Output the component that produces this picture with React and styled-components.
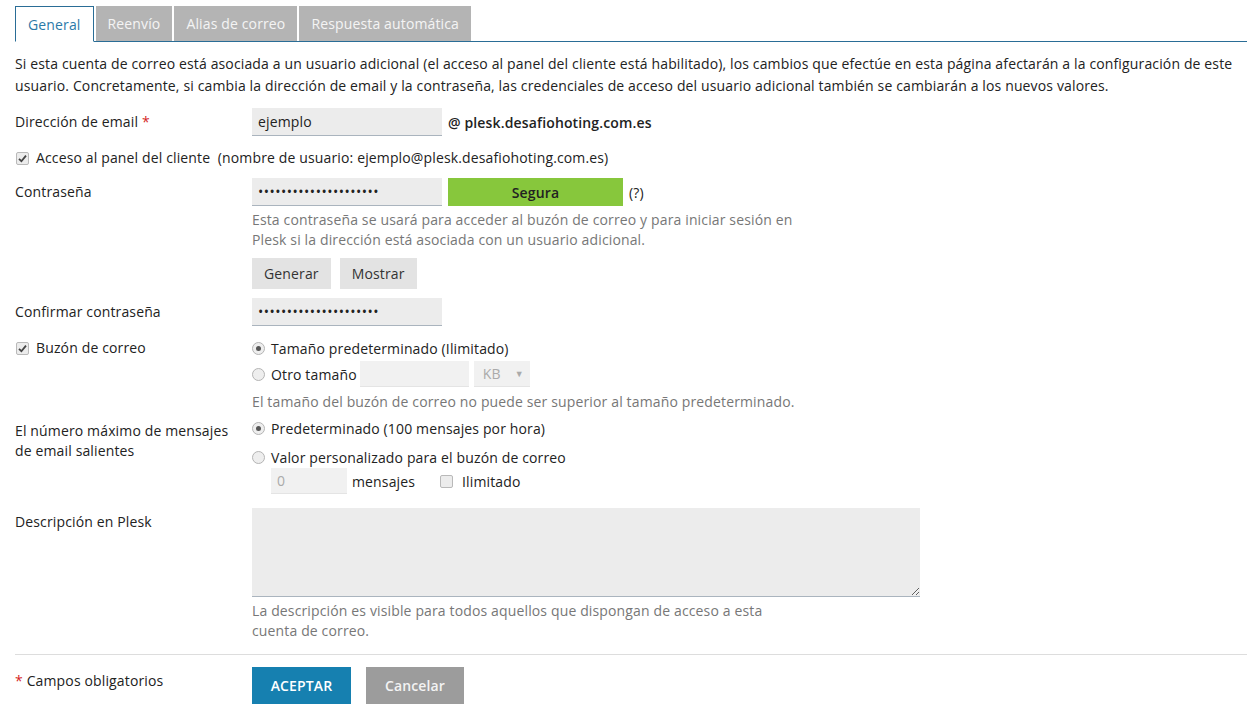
import React from "react";
import styled, { createGlobalStyle } from "styled-components";

const FONT = `"Open Sans", "Liberation Sans", sans-serif`;

const GlobalStyle = createGlobalStyle`
  body {
    margin: 0;
    background: #fff;
    font-family: ${FONT};
    font-size: 14px;
    letter-spacing: 0.14px;
    color: #222;
  }
`;

const Page = styled.div`
  padding: 6px 9px 0 15px;
`;

const TabBar = styled.div`
  display: flex;
  gap: 2px;
  border-bottom: 1px solid #2a6d96;
  height: 35px;
`;

const Tab = styled.div`
  box-sizing: border-box;
  padding: 0 12px;
  display: flex;
  align-items: center;
  background: ${(p) => (p.active ? "#fff" : "#b4b4b4")};
  color: ${(p) => (p.active ? "#2b79a8" : "#f4f4f4")};
  border: ${(p) => (p.active ? "1px solid #2a6d96" : "none")};
  border-bottom: ${(p) => (p.active ? "1px solid #fff" : "none")};
  height: ${(p) => (p.active ? "36px" : "35px")};
`;

const Intro = styled.p`
  margin: 11px 0 11px 0;
  line-height: 22px;
`;

const Row = styled.div`
  display: grid;
  grid-template-columns: 237px 1fr;
  margin-top: ${(p) => p.gap ?? 0}px;
`;

const Label = styled.div`
  line-height: ${(p) => p.lh ?? 28}px;
  padding-top: ${(p) => p.pt ?? 0}px;
`;

const Required = styled.span`
  color: #d51f1f;
`;

const Line = styled.div`
  display: flex;
  align-items: center;
  gap: ${(p) => p.gap ?? 6}px;
  min-height: 20px;
  margin-top: ${(p) => p.mt ?? 0}px;
  padding-left: ${(p) => p.indent ?? 0}px;
`;

const TextInput = styled.input`
  box-sizing: border-box;
  width: ${(p) => p.w ?? 190}px;
  height: ${(p) => p.h ?? 28}px;
  border: none;
  border-bottom: 1px solid ${(p) => (p.disabled ? "#e4e4e4" : "#aab4be")};
  background: ${(p) => (p.disabled ? "#f1f1f1" : "#ececec")};
  padding: 0 6px;
  font-family: ${FONT};
  font-size: 14px;
  letter-spacing: ${(p) => (p.type === "password" ? "0.5px" : "0.14px")};
  color: ${(p) => (p.disabled ? "#aaa" : "#222")};
  outline: none;
  margin: 0 0 0 ${(p) => p.ml ?? 0}px;
`;

const Domain = styled.span`
  font-weight: 600;
  margin-left: 6px;
`;

const Strength = styled.div`
  width: 175px;
  height: 28px;
  background: #87c73c;
  display: flex;
  align-items: center;
  justify-content: center;
  font-weight: 600;
  margin-left: 6px;
`;

const Hint = styled.span`
  margin-left: 6px;
`;

const Help = styled.div`
  color: #777;
  line-height: 20px;
  max-width: ${(p) => p.mw ?? 545}px;
  margin-top: ${(p) => p.mt ?? 0}px;
`;

const Buttons = styled.div`
  display: flex;
  gap: ${(p) => p.gap ?? 9}px;
  margin-top: ${(p) => p.mt ?? 0}px;
`;

const GrayButton = styled.button`
  height: 31px;
  padding: 0 12px;
  border: none;
  background: #e3e3e3;
  color: #333;
  font-family: ${FONT};
  font-size: 14px;
  letter-spacing: 0.14px;
`;

const Box = styled.span`
  width: 11px;
  height: 11px;
  border: 1px solid #b9b9b9;
  border-radius: 2px;
  background: #ececec;
  display: inline-flex;
  align-items: center;
  justify-content: center;
  flex-shrink: 0;
`;

const Round = styled.span`
  width: 11px;
  height: 11px;
  border: 1px solid #b4b4b4;
  border-radius: 50%;
  background: #eee;
  display: inline-flex;
  align-items: center;
  justify-content: center;
  flex-shrink: 0;
  &::after {
    content: "";
    width: 5px;
    height: 5px;
    border-radius: 50%;
    background: ${(p) => (p.on ? "#555" : "transparent")};
  }
`;

const CheckLabel = styled.label`
  display: flex;
  align-items: center;
  gap: 7px;
  line-height: 20px;
  padding-left: 1px;
`;

const Select = styled.div`
  box-sizing: border-box;
  width: 56px;
  height: 26px;
  background: #f1f1f1;
  border-bottom: 1px solid #e4e4e4;
  color: #aaa;
  display: flex;
  align-items: center;
  justify-content: space-between;
  padding: 0 6px 0 9px;
  margin-left: -1px;
  span {
    font-size: 9px;
  }
`;

const TextArea = styled.textarea`
  box-sizing: border-box;
  width: 668px;
  height: 89px;
  border: none;
  border-bottom: 1px solid #aab4be;
  background: #ececec;
  display: block;
  margin: 0;
`;

const Divider = styled.hr`
  border: none;
  border-top: 1px solid #ddd;
  margin: 13px 0 12px 0;
`;

const ActionButton = styled.button`
  height: 37px;
  min-width: ${(p) => p.w}px;
  border: none;
  font-family: ${FONT};
  font-size: 14px;
  letter-spacing: 0.14px;
  font-weight: 600;
  background: ${(p) => (p.primary ? "#1680b0" : "#9c9c9c")};
  color: ${(p) => (p.primary ? "#fff" : "#f3f3f3")};
`;

const Check = ({ on }) => (
  <Box>
    {on && (
      <svg width="9" height="9" viewBox="0 0 9 9">
        <path d="M1 4.8 L3.4 7.2 L8 1.6" fill="none" stroke="#444" strokeWidth="1.8" />
      </svg>
    )}
  </Box>
);

const App = () => {
  return (
    <React.Fragment>
      <GlobalStyle />
      <Page>
        <TabBar>
          <Tab active>General</Tab>
          <Tab>Reenvío</Tab>
          <Tab>Alias de correo</Tab>
          <Tab>Respuesta automática</Tab>
        </TabBar>

        <Intro>
          Si esta cuenta de correo está asociada a un usuario adicional (el
          acceso al panel del cliente está habilitado), los cambios que efectúe
          en esta página afectarán a la configuración de este usuario.
          Concretamente, si cambia la dirección de email y la contraseña, las
          credenciales de acceso del usuario adicional también se cambiarán a
          los nuevos valores.
        </Intro>

        <Row>
          <Label>
            Dirección de email <Required>*</Required>
          </Label>
          <Line gap={0}>
            <TextInput defaultValue="ejemplo" readOnly />
            <Domain>@ plesk.desafiohoting.com.es</Domain>
          </Line>
        </Row>

        <Line mt={12}>
          <CheckLabel>
            <Check on />
            Acceso al panel del cliente&nbsp; (nombre de usuario:
            ejemplo@plesk.desafiohoting.com.es)
          </CheckLabel>
        </Line>

        <Row gap={10}>
          <Label>Contraseña</Label>
          <div>
            <Line gap={0}>
              <TextInput type="password" defaultValue="passwordpassword12345" readOnly />
              <Strength>Segura</Strength>
              <Hint>(?)</Hint>
            </Line>
            <Help mt={4}>
              Esta contraseña se usará para acceder al buzón de correo y para
              iniciar sesión en Plesk si la dirección está asociada con un
              usuario adicional.
            </Help>
            <Buttons mt={8}>
              <GrayButton>Generar</GrayButton>
              <GrayButton>Mostrar</GrayButton>
            </Buttons>
          </div>
        </Row>

        <Row gap={9}>
          <Label>Confirmar contraseña</Label>
          <Line>
            <TextInput type="password" defaultValue="passwordpassword12345" readOnly />
          </Line>
        </Row>

        <Row gap={12}>
          <Label lh={20}>
            <CheckLabel>
              <Check on />
              Buzón de correo
            </CheckLabel>
          </Label>
          <div>
            <Line>
              <Round on />
              Tamaño predeterminado (Ilimitado)
            </Line>
            <Line mt={3}>
              <Round />
              Otro tamaño
              <TextInput disabled w={109} h={26} ml={-3} />
              <Select>
                KB <span>▼</span>
              </Select>
            </Line>
            <Help mt={5} mw={700}>
              El tamaño del buzón de correo no puede ser superior al tamaño
              predeterminado.
            </Help>
          </div>
        </Row>

        <Row gap={6}>
          <Label lh={20} pt={3}>
            El número máximo de mensajes
            <br />
            de email salientes
          </Label>
          <div>
            <Line>
              <Round on />
              Predeterminado (100 mensajes por hora)
            </Line>
            <Line mt={9}>
              <Round />
              Valor personalizado para el buzón de correo
            </Line>
            <Line mt={1} indent={19} gap={5}>
              <TextInput disabled w={76} h={26} defaultValue="0" />
              mensajes
              <Line gap={9} indent={20}>
                <Check />
                Ilimitado
              </Line>
            </Line>
          </div>
        </Row>

        <Row gap={14}>
          <Label>Descripción en Plesk</Label>
          <div>
            <TextArea />
            <Help mt={4}>
              La descripción es visible para todos aquellos que dispongan de
              acceso a esta cuenta de correo.
            </Help>
          </div>
        </Row>

        <Divider />

        <Row>
          <Label>
            <Required>*</Required> Campos obligatorios
          </Label>
          <Buttons gap={15}>
            <ActionButton primary w={99}>
              ACEPTAR
            </ActionButton>
            <ActionButton w={98}>Cancelar</ActionButton>
          </Buttons>
        </Row>
      </Page>
    </React.Fragment>
  );
};

export default App;
